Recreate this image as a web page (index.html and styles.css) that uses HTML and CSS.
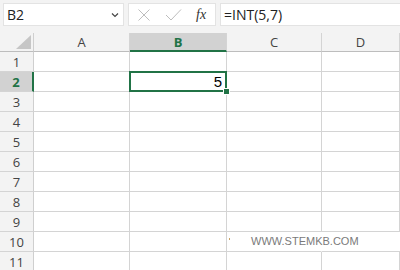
FILE: index.html
```html
<!DOCTYPE html>
<html>
<head>
<meta charset="utf-8">
<link rel="stylesheet" href="styles.css">
</head>
<body>
<div class="topbar">
  <div class="namebox"><span class="nb-text">B2</span>
    <svg class="chev" width="8" height="6" viewBox="0 0 8 6"><path d="M1 1.5 L4 4.5 L7 1.5" fill="none" stroke="#444" stroke-width="1.2"/></svg>
  </div>
  <div class="fxbox">
    <svg class="ico" width="14" height="14" viewBox="0 0 14 14"><path d="M1.5 1.5 L12.5 12.5 M12.5 1.5 L1.5 12.5" stroke="#bdbdbd" stroke-width="1"/></svg>
    <svg class="ico check" width="17" height="14" viewBox="0 0 17 14"><path d="M1 7 L6 12 L16 1.5" fill="none" stroke="#bdbdbd" stroke-width="1"/></svg>
    <span class="fx">fx</span>
  </div>
  <div class="formula">=INT(5,7)</div>
</div>
<div class="sheet">
  <div class="corner"><span class="tri"></span></div>
  <div class="ch">A</div>
  <div class="ch sel">B</div>
  <div class="ch">C</div>
  <div class="ch">D</div>

  <div class="rh">1</div><div class="c"></div><div class="c"></div><div class="c"></div><div class="c"></div>
  <div class="rh rsel">2</div><div class="c"></div><div class="c active"><span class="val">5</span><span class="handle"></span></div><div class="c"></div><div class="c"></div>
  <div class="rh">3</div><div class="c"></div><div class="c"></div><div class="c"></div><div class="c"></div>
  <div class="rh">4</div><div class="c"></div><div class="c"></div><div class="c"></div><div class="c"></div>
  <div class="rh">5</div><div class="c"></div><div class="c"></div><div class="c"></div><div class="c"></div>
  <div class="rh">6</div><div class="c"></div><div class="c"></div><div class="c"></div><div class="c"></div>
  <div class="rh">7</div><div class="c"></div><div class="c"></div><div class="c"></div><div class="c"></div>
  <div class="rh">8</div><div class="c"></div><div class="c"></div><div class="c"></div><div class="c"></div>
  <div class="rh">9</div><div class="c"></div><div class="c"></div><div class="c"></div><div class="c"></div>
  <div class="rh">10</div><div class="c"></div><div class="c"></div><div class="c wm-cell"><span class="tick"></span><span class="wm">WWW.STEMKB.COM</span></div><div class="c nob"></div>
  <div class="rh">11</div><div class="c"></div><div class="c"></div><div class="c"></div><div class="c"></div>
</div>
</body>
</html>
```
FILE: styles.css
```css
html, body {
  margin: 0;
  padding: 0;
  background: #ffffff;
  font-family: "Open Sans", "Noto Sans", "Liberation Sans", sans-serif;
  overflow: hidden;
}
.topbar {
  height: 33px;
  box-sizing: border-box;
  background: #f3f3f3;
  display: flex;
  align-items: flex-start;
  padding: 3px 0 0 3px;
}
.namebox {
  width: 121px;
  height: 23px;
  box-sizing: border-box;
  background: #fff;
  border: 1px solid #e3e3e3;
  display: flex;
  align-items: center;
  justify-content: space-between;
  padding: 0 4px 0 3px;
}
.nb-text {
  font-size: 14px;
  color: #222;
}
.chev { margin-top: 1px; }
.fxbox {
  margin-left: 4px;
  width: 88px;
  height: 23px;
  box-sizing: border-box;
  background: #fff;
  border: 1px solid #e3e3e3;
  display: flex;
  align-items: center;
  padding-left: 8px;
}
.ico { display: block; }
.check { margin-left: 14px; }
.fx {
  margin-left: 14px;
  font-family: "Liberation Serif", serif;
  font-style: italic;
  font-size: 14px;
  color: #333;
}
.formula {
  margin-left: 4px;
  flex: 1;
  height: 23px;
  box-sizing: border-box;
  background: #fff;
  border: 1px solid #e3e3e3;
  border-right: none;
  font-size: 14px;
  color: #222;
  padding-left: 3px;
  line-height: 21px;
}
.sheet {
  display: grid;
  grid-template-columns: 34px 96px 97px 95px 78px;
  grid-template-rows: 19px repeat(11, 20px);
  margin-top: 0;
}
.corner {
  background: #f3f3f3;
  border-right: 1px solid #cfcfcf;
  border-bottom: 1px solid #bdbdbd;
  position: relative;
}
.tri {
  position: absolute;
  right: 2px;
  bottom: 2px;
  width: 0;
  height: 0;
  border-left: 15px solid transparent;
  border-bottom: 14px solid #c6c6c6;
}
.ch {
  background: #f3f3f3;
  border-right: 1px solid #d4d4d4;
  border-bottom: 1px solid #bdbdbd;
  font-size: 13px;
  color: #444;
  text-align: center;
  line-height: 18px;
}
.ch.sel {
  background: #d2d2d2;
  color: #217346;
  font-weight: bold;
  border-bottom: 2px solid #217346;
  line-height: 18px;
}
.rh {
  background: #f3f3f3;
  border-right: 1px solid #cfcfcf;
  border-bottom: 1px solid #d4d4d4;
  font-size: 13px;
  color: #444;
  text-align: center;
  line-height: 20px;
}
.rh.rsel {
  background: #d2d2d2;
  color: #217346;
  font-weight: bold;
  border-right: 2px solid #217346;
}
.c {
  border-right: 1px solid #d4d4d4;
  border-bottom: 1px solid #d4d4d4;
  position: relative;
}
.active {
  box-sizing: border-box;
}
.active::before {
  content: "";
  position: absolute;
  left: -1px;
  top: -1px;
  right: -1px;
  bottom: -1px;
  border: 2px solid #217346;
}
.val {
  position: absolute;
  right: 4px;
  top: 1px;
  font-family: "Liberation Sans", Arial, sans-serif;
  font-size: 15px;
  color: #000;
}
.handle {
  position: absolute;
  right: -4px;
  bottom: -4px;
  width: 5px;
  height: 5px;
  background: #217346;
  border: 1px solid #fff;
  z-index: 2;
}
.wm-cell { overflow: visible; z-index: 1; }
.c.nob { border-right: none; }
.wm-cell { border-right-color: transparent; }
.tick {
  position: absolute;
  left: 2px;
  top: 6px;
  width: 1px;
  height: 2px;
  background: #c8a060;
}
.wm {
  position: absolute;
  left: 24px;
  top: 3px;
  white-space: nowrap;
  font-family: "Liberation Sans", Arial, sans-serif;
  font-size: 11px;
  color: #7a7a7a;
}
```
